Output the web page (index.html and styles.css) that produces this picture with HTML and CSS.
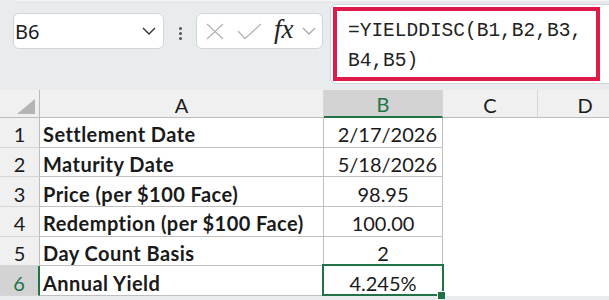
FILE: index.html
```html
<!doctype html>
<html>

<head>
    <title>YIELDDISC</title>
    <link rel="stylesheet" href="styles.css">
</head>

<body>
    <div class="ribbon-edge"></div>
    <div class="bar">
        <div class="namebox">
            <span class="ref">B6</span>
            <svg class="chev" width="14" height="8" viewBox="0 0 14 8">
                <path d="M1 1 L7 7 L13 1" fill="none" stroke="#333" stroke-width="1.4" />
            </svg>
        </div>
        <div class="grip"><i></i><i></i><i></i></div>
        <div class="fnbox">
            <svg width="18" height="17" viewBox="0 0 18 17">
                <path d="M1 1 L17 16 M17 1 L1 16" fill="none" stroke="#b4b4b4" stroke-width="1.3" />
            </svg>
            <svg width="25" height="17" viewBox="0 0 25 17">
                <path d="M1 8 L8 15.5 L24 1" fill="none" stroke="#b4b4b4" stroke-width="1.3" />
            </svg>
            <span class="fx">fx</span>
            <svg width="14" height="8" viewBox="0 0 14 8">
                <path d="M1 1 L7 7 L13 1" fill="none" stroke="#aaa" stroke-width="1.3" />
            </svg>
        </div>
        <div class="input">
            <div class="mark">=YIELDDISC(B1,B2,B3,<br>B4,B5)</div>
        </div>
    </div>

    <div class="sheet">
        <div class="corner"><span class="tri"></span></div>
        <div class="ch">A</div>
        <div class="ch active">B</div>
        <div class="ch">C</div>
        <div class="ch">D</div>

        <div class="rh">1</div>
        <div class="cell label">Settlement Date</div>
        <div class="cell right">2/17/2026</div>
        <div class="blank"></div>
        <div class="blank"></div>

        <div class="rh">2</div>
        <div class="cell label">Maturity Date</div>
        <div class="cell right">5/18/2026</div>
        <div class="blank"></div>
        <div class="blank"></div>

        <div class="rh">3</div>
        <div class="cell label">Price (per $100 Face)</div>
        <div class="cell mid">98.95</div>
        <div class="blank"></div>
        <div class="blank"></div>

        <div class="rh">4</div>
        <div class="cell label">Redemption (per $100 Face)</div>
        <div class="cell mid">100.00</div>
        <div class="blank"></div>
        <div class="blank"></div>

        <div class="rh">5</div>
        <div class="cell label">Day Count Basis</div>
        <div class="cell mid">2</div>
        <div class="blank"></div>
        <div class="blank"></div>

        <div class="rh active">6</div>
        <div class="cell label">Annual Yield</div>
        <div class="cell mid selected">4.245%</div>
        <div class="blank"></div>
        <div class="blank"></div>
    </div>
</body>

</html>
```

FILE: styles.css
```css
html,
body {
    margin: 0;
    padding: 0;
    width: 100%;
    height: 100%;
    overflow: hidden;
    background: #e9ecef;
}

* {
    box-sizing: border-box;
}

.ribbon-edge {
    height: 3px;
    margin-left: 15px;
    background: linear-gradient(#f6f7f8, #dfe2e5);
}

.bar {
    display: flex;
    align-items: flex-start;
    height: 87px;
    padding-left: 13px;
}

.bar > * {
    flex: none;
}

.namebox {
    display: flex;
    align-items: center;
    justify-content: space-between;
    width: 151px;
    height: 36px;
    margin-top: 10px;
    padding: 0 7px 0 1px;
    background: #fff;
    border: 1px solid #d2d4d6;
    border-radius: 6px;
}

.ref {
    font-family: "Noto Sans", sans-serif;
    font-size: 20px;
    color: #1a1a1a;
}

.grip {
    display: flex;
    flex-direction: column;
    align-items: center;
    gap: 2px;
    width: 32px;
    margin-top: 24px;
}

.grip i {
    display: block;
    width: 3px;
    height: 3px;
    border-radius: 50%;
    background: #555;
}

.fnbox {
    display: flex;
    align-items: center;
    width: 127px;
    height: 36px;
    margin-top: 10px;
    padding-left: 9px;
    gap: 13px;
    background: #fff;
    border: 1px solid #d2d4d6;
    border-radius: 6px;
}

.fx {
    font-family: "Liberation Serif", serif;
    font-style: italic;
    font-size: 27px;
    color: #222;
    margin-left: -1px;
    margin-right: -5px;
    margin-top: -3px;
}

.input {
    width: 300px;
    height: 80px;
    margin-top: 1px;
    margin-left: 7px;
    background: #fff;
    border: 1px solid #d2d4d6;
    border-radius: 6px;
}

.mark {
    width: 267px;
    height: 74px;
    margin: 2px 0 0 2px;
    padding: 5px 0 0 11px;
    border: 4px solid #e0194b;
    font-family: "Liberation Mono", monospace;
    font-size: 19.5px;
    line-height: 30px;
    color: #222;
}

.sheet {
    display: grid;
    grid-template-columns: 40px 284px 119px 95px 95px;
    grid-template-rows: 28px repeat(6, 29.67px);
    font-family: Lato, sans-serif;
    font-size: 20px;
    color: #1a1a1a;
    background: #fff;
}

.corner,
.ch {
    background: #f0f0f0;
    border-bottom: 1px solid #bcbcbc;
    border-right: 1px solid #d6d6d6;
}

.corner {
    position: relative;
    border-right-color: #bcbcbc;
}

.tri {
    position: absolute;
    right: 4px;
    bottom: 3px;
    width: 0;
    height: 0;
    border-left: 18px solid transparent;
    border-bottom: 15px solid #b4b4b4;
}

.ch {
    display: flex;
    align-items: center;
    justify-content: center;
    padding-top: 2px;
}

.ch.active {
    background: #d3d3d3;
    color: #217346;
    border-bottom: 2px solid #217346;
}

.rh {
    display: flex;
    align-items: center;
    justify-content: center;
    padding-top: 4px;
    background: #f0f0f0;
    border-right: 1px solid #bcbcbc;
    border-bottom: 1px solid #d6d6d6;
}

.rh.active {
    background: #d3d3d3;
    color: #217346;
    border-right: 2px solid #217346;
}

.cell {
    display: flex;
    align-items: center;
    padding-top: 4px;
    border-right: 1px solid #bfbfbf;
    border-bottom: 1px solid #bfbfbf;
}

.label {
    font-weight: bold;
    letter-spacing: 0.45px;
    padding-left: 3px;
}

.right {
    justify-content: flex-end;
    padding-right: 5px;
}

.mid {
    justify-content: center;
}

.selected {
    position: relative;
}

.selected::after {
    content: '';
    position: absolute;
    top: -2px;
    left: -2px;
    right: -2px;
    bottom: -1px;
    border: 2px solid #217346;
}

.selected::before {
    content: '';
    position: absolute;
    right: -3px;
    bottom: -4px;
    width: 7px;
    height: 7px;
    background: #217346;
    border-left: 1px solid #fff;
    border-top: 1px solid #fff;
    z-index: 1;
}
```
